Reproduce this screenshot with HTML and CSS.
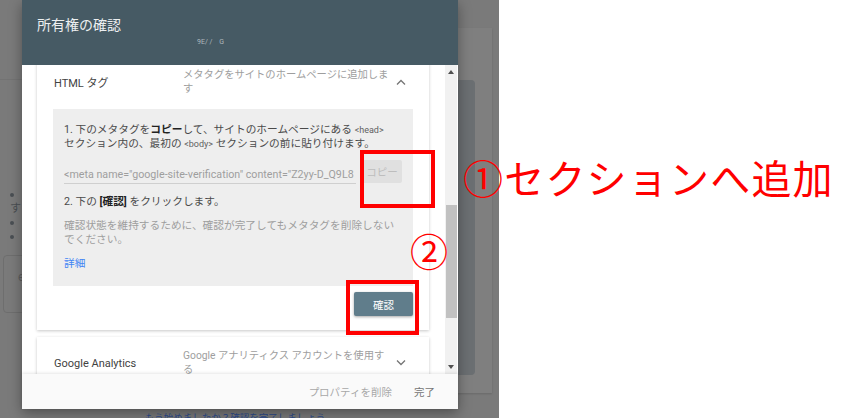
FILE: index.html
```html
<!DOCTYPE html>
<html lang="ja">
<head>
    <meta charset="UTF-8">
    <meta name="viewport" content="width=device-width, initial-scale=1.0">
    <title>所有権の確認</title>
    <link rel="stylesheet" href="styles.css">
</head>
<body>
    <div class="shot">
        <!-- page behind the dialog -->
        <div class="behind">
            <div class="bg-line"></div>
            <ul class="bg-list">
                <li></li>
                <li class="plain">す</li>
                <li></li>
                <li></li>
            </ul>
            <div class="bg-field">e</div>
            <div class="bg-panel"></div>
            <div class="bg-card"></div>
            <div class="bg-link">もう始めましたか？確認を完了しましょう</div>
        </div>

        <div class="dialog">
            <div class="dialog-head">
                <div class="dialog-title">所有権の確認</div>
                <div class="dialog-sub">9E/ /&nbsp;&nbsp;&nbsp;&nbsp;G</div>
            </div>

            <div class="dialog-body">
                <div class="methods">
                    <div class="method open">
                        <div class="method-head">
                            <div class="method-name">HTML タグ</div>
                            <div class="method-desc">メタタグをサイトのホームページに追加します</div>
                            <svg class="chev" width="10" height="6" viewBox="0 0 10 6"><polyline points="1,5.5 5,1.5 9,5.5" fill="none" stroke="#757575" stroke-width="1.3"/></svg>
                        </div>
                        <div class="steps">
                            <p class="step">1. 下のメタタグを<b>コピー</b>して、サイトのホームページにある <code>&lt;head&gt;</code><br>セクション内の、最初の <code>&lt;body&gt;</code> セクションの前に貼り付けます。</p>
                            <div class="copy-row">
                                <div class="meta-field">&lt;meta name="google-site-verification" content="Z2yy-D_Q9L8</div>
                                <button class="copy-btn">コピー</button>
                            </div>
                            <p class="step step2">2. 下の <b>[確認]</b> をクリックします。</p>
                            <p class="note">確認状態を維持するために、確認が完了してもメタタグを削除しないでください。</p>
                            <a class="more" href="#">詳細</a>
                        </div>
                        <div class="actions">
                            <button class="verify-btn">確認</button>
                        </div>
                    </div>

                    <div class="method">
                        <div class="method-head">
                            <div class="method-name">Google Analytics</div>
                            <div class="method-desc">Google アナリティクス アカウントを使用する</div>
                            <svg class="chev" width="10" height="6" viewBox="0 0 10 6"><polyline points="1,0.5 5,4.5 9,0.5" fill="none" stroke="#757575" stroke-width="1.3"/></svg>
                        </div>
                    </div>
                </div>
                <div class="scrollbar">
                    <span class="arrow up"></span>
                    <span class="thumb"></span>
                    <span class="arrow down"></span>
                </div>
            </div>

            <div class="dialog-foot">
                <span class="foot-btn muted">プロパティを削除</span>
                <span class="foot-btn">完了</span>
            </div>
        </div>

        <!-- annotations -->
        <div class="mark mark-copy"></div>
        <div class="mark mark-verify"></div>
        <div class="num num-2">②</div>
    </div>

    <div class="callout">①セクションへ追加</div>
</body>
</html>
```

FILE: styles.css
```css
body {
    margin: 0;
    width: 850px;
    height: 418px;
    background-color: #fff;
    font-family: Roboto, "Noto Sans CJK JP", sans-serif;
    position: relative;
    overflow: hidden;
}

.shot {
    position: relative;
    width: 499px;
    height: 418px;
    background-color: #7a7a7a;
    overflow: hidden;
}

/* dimmed page */
.behind {
    position: absolute;
    inset: 0;
}

.bg-line {
    position: absolute;
    left: 0;
    top: 79px;
    width: 30px;
    height: 1px;
    background-color: #737373;
}

.bg-list {
    position: absolute;
    left: 6px;
    top: 188px;
    margin: 0;
    padding: 0;
    list-style: none;
    font-size: 11px;
    color: #4a4f53;
}

.bg-list li {
    height: 14px;
    line-height: 14px;
    position: relative;
    padding-left: 4px;
}

.bg-list li::before {
    content: "";
    position: absolute;
    left: 4px;
    top: 5px;
    width: 4px;
    height: 4px;
    border-radius: 50%;
    background-color: #4a4f53;
}

.bg-list li.plain::before {
    display: none;
}

.bg-field {
    position: absolute;
    left: 3px;
    top: 255px;
    width: 40px;
    height: 58px;
    border: 1px solid #6e6e6e;
    border-radius: 4px;
    box-sizing: border-box;
    padding: 14px 0 0 14px;
    font-size: 12px;
    color: #5d5d5d;
}

.bg-panel {
    position: absolute;
    left: 420px;
    top: 28px;
    width: 72px;
    height: 365px;
    background-color: #7f7f7f;
    box-shadow: 0 1px 2px rgba(0, 0, 0, 0.15);
}

.bg-card {
    position: absolute;
    left: 420px;
    top: 80px;
    width: 55px;
    height: 295px;
    border-radius: 4px;
    background-color: #6b6f72;
}

.bg-link {
    position: absolute;
    left: 145px;
    top: 411px;
    font-size: 9.5px;
    line-height: 14px;
    color: #2d4a8a;
}

/* dialog */
.dialog {
    position: absolute;
    left: 22px;
    top: 0;
    width: 436px;
    height: 409px;
    display: flex;
    flex-direction: column;
    background-color: #fff;
    box-shadow: 0 4px 12px rgba(0, 0, 0, 0.35);
}

.dialog-head {
    height: 65px;
    background-color: #465a64;
    padding: 15px 15px 0;
    box-sizing: border-box;
    color: #eceff1;
    flex-shrink: 0;
}

.dialog-title {
    font-size: 14px;
    line-height: 20px;
}

.dialog-sub {
    margin: 2px 0 0 160px;
    font-size: 7px;
    line-height: 10px;
    color: #aeb8bd;
}

.dialog-body {
    flex: 1;
    display: flex;
    min-height: 0;
}

.methods {
    flex: 1;
    overflow: hidden;
    padding: 0 16px 0 15px;
}

.method {
    background-color: #fff;
    box-shadow: 0 1px 3px rgba(0, 0, 0, 0.22);
    margin-bottom: 7px;
}

.method.open {
    margin-top: -9px;
}

.method-head {
    display: flex;
    align-items: center;
    height: 34px;
    padding: 9px 17px 0 17px;
}

.method-name {
    width: 129px;
    font-size: 11px;
    color: #424242;
}

.method-desc {
    width: 210px;
    font-size: 10.3px;
    line-height: 14px;
    color: #9e9e9e;
}

.chev {
    margin-left: auto;
    margin-right: 6px;
}

.steps {
    margin: 10px 16px 0;
    padding: 14px 11px 15px;
    background-color: #eeeeee;
    font-size: 10.7px;
    line-height: 14px;
    color: #4a4a4a;
}

.step {
    margin: 0;
}

.step b {
    color: #212121;
}

.step code {
    font-family: Roboto, sans-serif;
    font-size: 9px;
    line-height: 1;
    color: #616161;
}

.copy-row {
    display: flex;
    align-items: flex-start;
    gap: 6px;
    margin-top: 9px;
}

.meta-field {
    width: 292px;
    white-space: nowrap;
    overflow: hidden;
    font-size: 10.7px;
    line-height: 14px;
    color: #9e9e9e;
    margin-top: 8px;
    padding-bottom: 1px;
    border-bottom: 1px solid #cfcfcf;
}

.copy-btn {
    width: 40px;
    height: 23px;
    padding: 0;
    border: none;
    border-radius: 2px;
    background-color: #e0e0e0;
    color: #bdbdbd;
    font-family: Roboto, "Noto Sans CJK JP", sans-serif;
    font-size: 10.5px;
}

.step2 {
    margin-top: 11px;
}

.note {
    margin: 10px 0 0;
    color: #9e9e9e;
}

.more {
    display: block;
    margin-top: 10px;
    color: #4285f4;
    text-decoration: none;
}

.actions {
    display: flex;
    justify-content: flex-end;
    padding: 6px 16px 14px;
}

.verify-btn {
    width: 59px;
    height: 24px;
    border: none;
    border-radius: 2px;
    background-color: #607d8b;
    color: #fff;
    font-family: Roboto, "Noto Sans CJK JP", sans-serif;
    font-size: 10.5px;
    box-shadow: 0 1px 3px rgba(0, 0, 0, 0.35);
}

.scrollbar {
    width: 12px;
    margin-right: 1px;
    background-color: #f1f1f1;
    position: relative;
    flex-shrink: 0;
}

.arrow {
    position: absolute;
    left: 3px;
    width: 0;
    height: 0;
    border-left: 3px solid transparent;
    border-right: 3px solid transparent;
}

.arrow.up {
    top: 5px;
    border-bottom: 4px solid #505050;
}

.arrow.down {
    bottom: 5px;
    border-top: 4px solid #505050;
}

.thumb {
    position: absolute;
    left: 1px;
    right: 0;
    top: 140px;
    height: 113px;
    background-color: #c1c1c1;
}

.dialog-foot {
    height: 35px;
    flex-shrink: 0;
    display: flex;
    align-items: center;
    justify-content: flex-end;
    gap: 22px;
    padding-right: 23px;
    background-color: #fafafa;
    box-shadow: 0 -1px 3px rgba(0, 0, 0, 0.1);
    position: relative;
    font-size: 10.5px;
    color: #757575;
}

.foot-btn.muted {
    color: #a8a8a8;
}

/* red annotations */
.mark {
    position: absolute;
    border: 4px solid #ff0000;
    box-sizing: border-box;
}

.mark-copy {
    left: 360px;
    top: 150px;
    width: 75px;
    height: 58px;
}

.mark-verify {
    left: 346px;
    top: 280px;
    width: 73px;
    height: 55px;
}

.num {
    position: absolute;
    font-family: "Noto Sans CJK JP", sans-serif;
    color: #ff0000;
    line-height: 1;
}

.num-2 {
    left: 410px;
    top: 231px;
    font-size: 38px;
}

.callout {
    position: absolute;
    left: 463px;
    top: 153px;
    font-family: "Noto Sans CJK JP", sans-serif;
    font-size: 40px;
    line-height: 48px;
    letter-spacing: 1.2px;
    color: #ff0000;
    white-space: nowrap;
}
```
